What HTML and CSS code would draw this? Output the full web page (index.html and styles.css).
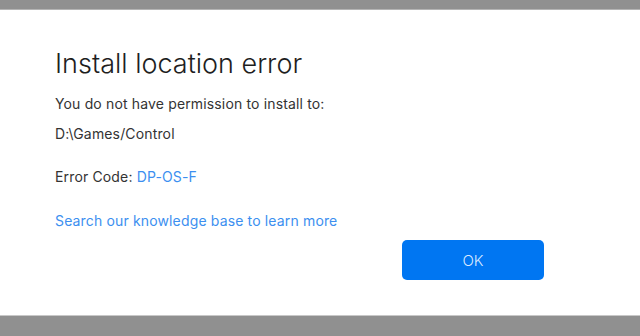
FILE: index.html
```html
<!DOCTYPE html>
<html lang="en">
<head>
    <meta charset="UTF-8">
    <meta name="viewport" content="width=device-width, initial-scale=1.0">
    <title>Install location error</title>
    <link rel="stylesheet" href="styles.css">
</head>
<body>
    <div class="shade shade-top"></div>

    <div class="dialog">
        <h1 class="title">Install location error</h1>
        <p class="line">You do not have permission to install to:</p>
        <p class="line">D:\Games/Control</p>
        <p class="line code">Error Code: <span class="link">DP-OS-F</span></p>
        <p class="line kb"><span class="link">Search our knowledge base to learn more</span></p>

        <div class="actions">
            <button class="ok">OK</button>
        </div>
    </div>

    <div class="shade shade-bottom"></div>
</body>
</html>
```

FILE: styles.css
```css
html, body {
    margin: 0;
    padding: 0;
}

body {
    width: 640px;
    height: 336px;
    display: flex;
    flex-direction: column;
    background-color: #ffffff;
    font-family: Inter, "Noto Sans", sans-serif;
    color: #2b2b2b;
    overflow: hidden;
}

.shade {
    background-color: #909090;
}

.shade-top {
    height: 9px;
    border-bottom: 1px solid #b4b4b4;
}

.shade-bottom {
    flex: 1;
    border-top: 1px solid #c8c8c8;
}

.dialog {
    height: 305px;
    box-sizing: border-box;
    padding: 37px 96px 0 55px; /* left edge of the text column */
    display: flex;
    flex-direction: column;
}

.title {
    margin: 0 0 14px 0;
    font-size: 27px;
    font-weight: 300;
    line-height: 34px;
    color: #1e1e1e;
}

.line {
    margin: 0 0 12px 0;
    font-size: 14px;
    line-height: 18px;
    letter-spacing: 0.15px;
    color: #333333;
}

.code {
    margin-top: 13px;
}

.kb {
    margin-top: 14px;
}

.link {
    color: #3c8ff0;
}

.actions {
    display: flex;
    justify-content: flex-end;
    margin-top: -2px;
}

.ok {
    width: 142px;
    height: 40px;
    border: none;
    border-radius: 5px;
    background-color: #0076f2;
    color: #d9e9ff;
    font-family: Inter, "Noto Sans", sans-serif;
    font-size: 15px;
    font-weight: 300;
    cursor: pointer;
}
```
